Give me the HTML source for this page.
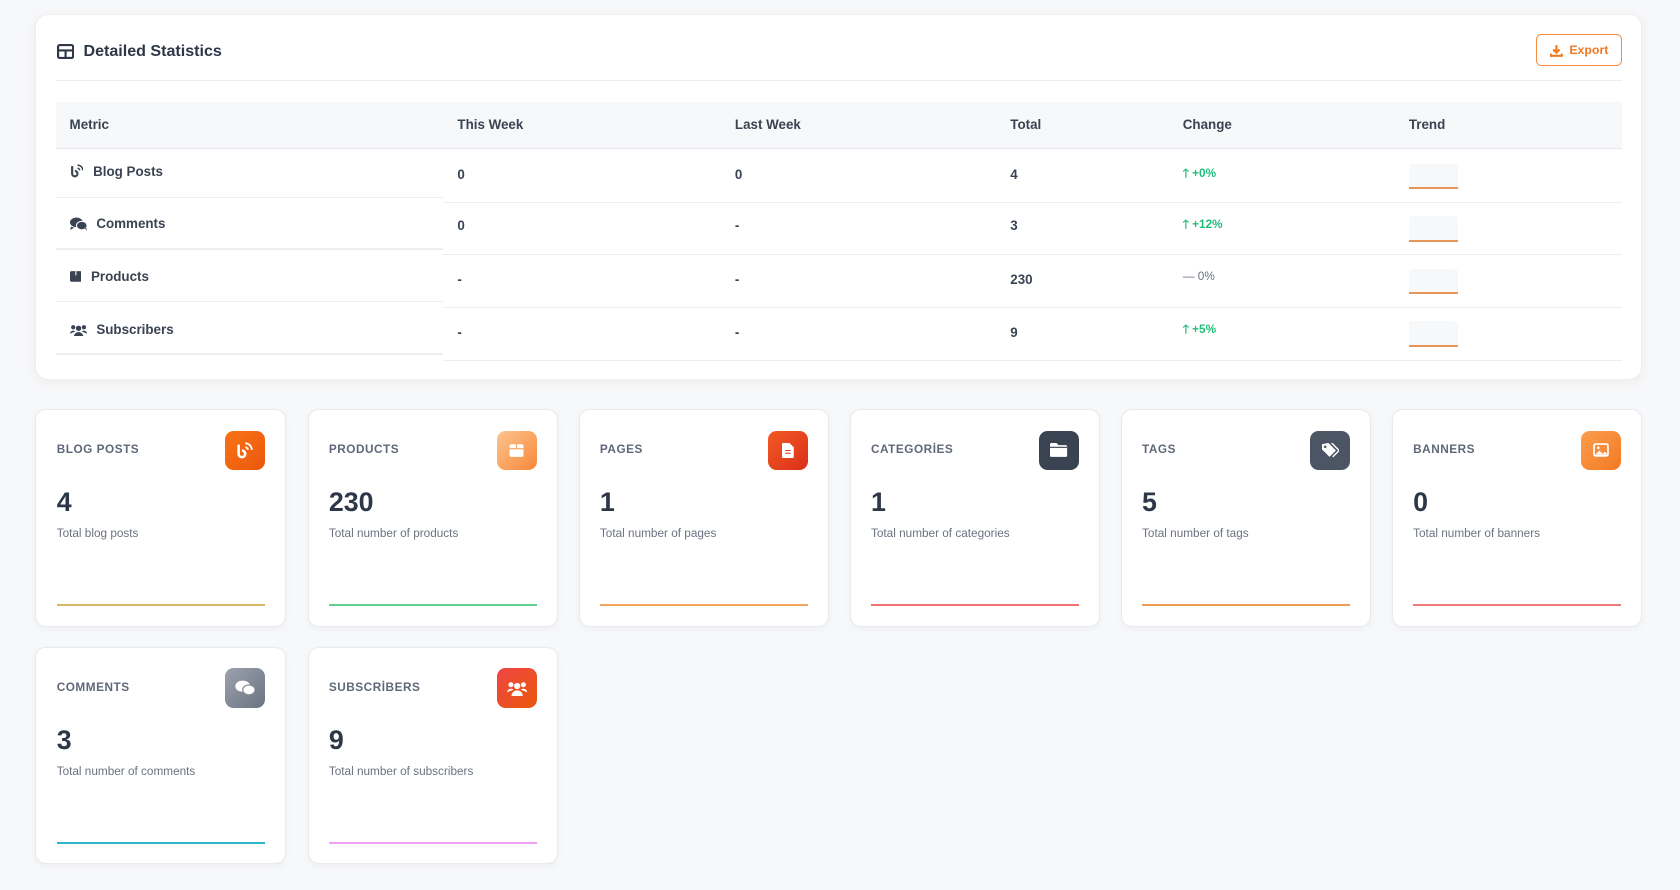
<!DOCTYPE html>
<html><head><meta charset="utf-8"><style>
html{zoom:1.07143}
body{margin:0;width:1568px;height:831px;background:#f7f8fa;font-family:"Liberation Sans",sans-serif;color:#2d3748;position:relative;overflow:hidden}
.panel{position:absolute;left:33px;top:13px;width:1498px;height:340px;background:#fff;border:1px solid #eceef1;border-radius:12px;box-shadow:0 2px 8px rgba(230,200,180,.25)}
.title{position:absolute;left:19px;top:25px;font-size:15px;font-weight:bold;display:flex;align-items:center;gap:9px;color:#2d3748}
.exp{position:absolute;right:18px;top:18px;width:80px;height:30px;border:1.5px solid #f58a3a;border-radius:5px;color:#f07a24;font-size:11.5px;font-weight:bold;display:flex;align-items:center;justify-content:center;gap:6px;box-sizing:border-box}
.hr{position:absolute;left:18px;right:18px;top:61px;height:1px;background:#eceef1}
.th{position:absolute;left:18px;right:18px;top:81px;height:43px;background:#f7f8fa;border-bottom:1px solid #e6e9ee}
.c{position:absolute;font-size:12.5px;font-weight:bold;color:#3a4352;display:flex;align-items:center;gap:9px}
.row{position:absolute;height:1px;background:#eceef1}
.card{position:absolute;width:232px;height:201px;background:#fff;border:1px solid #e8eaee;border-radius:10px;box-shadow:0 2px 6px rgba(0,0,0,.04)}
.card .l{position:absolute;left:19px;top:31px;font-size:11px;font-weight:bold;color:#5f6878;letter-spacing:.5px}
.card .ic{position:absolute;right:19px;top:19px;width:37px;height:37px;border-radius:8px;display:flex;align-items:center;justify-content:center}
.card .n{position:absolute;left:19px;top:72px;font-size:25px;font-weight:bold;color:#2d3748}
.card .d{position:absolute;left:19px;top:109px;font-size:11px;color:#6b7280}
.card .b{position:absolute;left:19px;right:19px;top:181px;height:2px}
.tr{position:absolute;width:46px;height:22px;background:#f7f8fa;border-bottom:2px solid #e8955a;border-radius:3px 3px 0 0}
.g{color:#1fbf7a;font-size:11px;gap:3px}
</style></head><body>
<div class="panel">
<div class="title"><svg width="16" height="14" viewBox="0 0 16 14"><rect x="1" y="1" width="14" height="12" rx="1.5" fill="none" stroke="#2d3748" stroke-width="2"/><path d="M1 6h14M8 6v7" stroke="#2d3748" stroke-width="2"/></svg>Detailed Statistics</div>
<div class="exp"><svg width="12" height="12" viewBox="0 0 12 12"><path d="M6 1v7M3 5l3 3 3-3M1 9v2h10V9" stroke="#f07a24" stroke-width="2" fill="none"/></svg>Export</div>
<div class="hr"></div>
<div class="th"></div>
<div class="c" style="left:31px;top:95px">Metric</div>
<div class="c" style="left:393px;top:95px">This Week</div>
<div class="c" style="left:652px;top:95px">Last Week</div>
<div class="c" style="left:909px;top:95px">Total</div>
<div class="c" style="left:1070px;top:95px">Change</div>
<div class="c" style="left:1281px;top:95px">Trend</div>

<div class="c" style="left:31px;top:139px"><svg width="13" height="13" viewBox="0 0 13 13"><path d="M2 2v7a2.5 2.5 0 1 0 2.5-2.5" stroke="#3a4352" stroke-width="2" fill="none"/><path d="M7 1a5 5 0 0 1 5 5M7 4a2 2 0 0 1 2 2" stroke="#3a4352" stroke-width="1.4" fill="none"/></svg>Blog Posts</div>
<div class="c" style="left:31px;top:188px"><svg width="16" height="13" viewBox="0 0 16 13"><ellipse cx="6" cy="5" rx="6" ry="4.5" fill="#3a4352"/><ellipse cx="11" cy="8" rx="5" ry="4" fill="#3a4352" stroke="#fff" stroke-width="1"/><path d="M1 9l-1 3 4-2z M14 11l2 2-1-3z" fill="#3a4352"/></svg>Comments</div>
<div class="c" style="left:31px;top:237px"><svg width="11" height="11" viewBox="0 0 11 11"><rect x="0" y="1" width="11" height="10" rx="1.5" fill="#3a4352"/><path d="M5.5 1v4" stroke="#fff" stroke-width="1"/></svg>Products</div>
<div class="c" style="left:31px;top:287px"><svg width="16" height="12" viewBox="0 0 16 12"><circle cx="8" cy="4" r="2.5" fill="#3a4352"/><circle cx="3" cy="3" r="2" fill="#3a4352"/><circle cx="13" cy="3" r="2" fill="#3a4352"/><path d="M3.5 12a4.5 4.5 0 0 1 9 0zM0 9a3 3 0 0 1 5-2zM16 9a3 3 0 0 0-5-2z" fill="#3a4352"/></svg>Subscribers</div>

<div class="c" style="left:393px;top:142px">0</div><div class="c" style="left:652px;top:142px">0</div><div class="c" style="left:909px;top:142px">4</div><div class="c g" style="left:1070px;top:140px">🡑 +0%</div>
<div class="c" style="left:393px;top:190px">0</div><div class="c" style="left:652px;top:190px">-</div><div class="c" style="left:909px;top:190px">3</div><div class="c g" style="left:1070px;top:188px">🡑 +12%</div>
<div class="c" style="left:393px;top:240px">-</div><div class="c" style="left:652px;top:240px">-</div><div class="c" style="left:909px;top:240px">230</div><div class="c" style="left:1070px;top:238px;color:#6b7280;font-size:11px;font-weight:normal">— 0%</div>
<div class="c" style="left:393px;top:289px">-</div><div class="c" style="left:652px;top:289px">-</div><div class="c" style="left:909px;top:289px">9</div><div class="c g" style="left:1070px;top:286px">🡑 +5%</div>

<div class="tr" style="left:1281px;top:139px"></div><div class="tr" style="left:1281px;top:188px"></div><div class="tr" style="left:1281px;top:237px"></div><div class="tr" style="left:1281px;top:286px"></div>

<div class="row" style="left:18px;width:362px;top:170px"></div><div class="row" style="left:380px;right:18px;top:175px"></div>
<div class="row" style="left:18px;width:362px;top:218px"></div><div class="row" style="left:380px;right:18px;top:223px"></div>
<div class="row" style="left:18px;width:362px;top:267px"></div><div class="row" style="left:380px;right:18px;top:273px"></div>
<div class="row" style="left:18px;width:362px;top:316px"></div><div class="row" style="left:380px;right:18px;top:322px"></div>
</div>

<div class="card" style="left:33px;top:382px"><div class="l">BLOG POSTS</div><div class="ic" style="background:linear-gradient(135deg,#f97316,#ea580c)"><svg width="16" height="16" viewBox="0 0 13 13"><path d="M2 2v7a2.5 2.5 0 1 0 2.5-2.5" stroke="#fff" stroke-width="2" fill="none"/><path d="M7 1a5 5 0 0 1 5 5M7 4a2 2 0 0 1 2 2" stroke="#fff" stroke-width="1.4" fill="none"/></svg></div><div class="n">4</div><div class="d">Total blog posts</div><div class="b" style="background:#d9b56a"></div></div>
<div class="card" style="left:287px;top:382px"><div class="l">PRODUCTS</div><div class="ic" style="background:linear-gradient(135deg,#fdc48f,#f7883a)"><svg width="14" height="13" viewBox="0 0 11 11"><rect x="0" y="1" width="11" height="10" rx="1.5" fill="#fff"/><path d="M5.5 1v4M0 4.5h11" stroke="#f9a866" stroke-width="1"/></svg></div><div class="n">230</div><div class="d">Total number of products</div><div class="b" style="background:#5fd08f"></div></div>
<div class="card" style="left:540px;top:382px"><div class="l">PAGES</div><div class="ic" style="background:linear-gradient(135deg,#f15a24,#dc2f1a)"><svg width="11" height="14" viewBox="0 0 11 14"><path d="M0 1a1 1 0 0 1 1-1h6l4 4v9a1 1 0 0 1-1 1H1a1 1 0 0 1-1-1z" fill="#fff"/><path d="M3 7h5M3 9.5h5" stroke="#e34020" stroke-width="1"/></svg></div><div class="n">1</div><div class="d">Total number of pages</div><div class="b" style="background:#f5a55e"></div></div>
<div class="card" style="left:793px;top:382px"><div class="l">CATEGORİES</div><div class="ic" style="background:#3a4352"><svg width="16" height="13" viewBox="0 0 16 13"><path d="M0 1.5A1.5 1.5 0 0 1 1.5 0H6l2 2h6.5A1.5 1.5 0 0 1 16 3.5v8a1.5 1.5 0 0 1-1.5 1.5h-13A1.5 1.5 0 0 1 0 11.5z" fill="#fff"/><path d="M0 4h16" stroke="#3a4352"/></svg></div><div class="n">1</div><div class="d">Total number of categories</div><div class="b" style="background:#ef7373"></div></div>
<div class="card" style="left:1046px;top:382px"><div class="l">TAGS</div><div class="ic" style="background:#4b5563"><svg width="16" height="14" viewBox="0 0 16 14"><path d="M0 1v5l7 7 6-6-7-7z" fill="#fff"/><circle cx="3" cy="3.5" r="1.2" fill="#4b5563"/><path d="M9 0l7 7-6 6" stroke="#fff" stroke-width="1.3" fill="none"/></svg></div><div class="n">5</div><div class="d">Total number of tags</div><div class="b" style="background:#eaa050"></div></div>
<div class="card" style="left:1299px;top:382px"><div class="l">BANNERS</div><div class="ic" style="background:linear-gradient(135deg,#fb9d4f,#f37a22)"><svg width="15" height="13" viewBox="0 0 15 13"><rect x="1" y="1" width="13" height="11" rx="1.5" fill="none" stroke="#fff" stroke-width="1.6"/><path d="M2 11l4-4 3 3 2-2 3 3z" fill="#fff"/><circle cx="5" cy="4.5" r="1.2" fill="#fff"/></svg></div><div class="n">0</div><div class="d">Total number of banners</div><div class="b" style="background:#f07b7b"></div></div>
<div class="card" style="left:33px;top:604px"><div class="l">COMMENTS</div><div class="ic" style="background:linear-gradient(135deg,#9ca3af,#6b7280)"><svg width="19" height="15" viewBox="0 0 16 13"><ellipse cx="6" cy="5" rx="6" ry="4.5" fill="#fff"/><ellipse cx="11" cy="8" rx="5" ry="4" fill="#fff" stroke="#878d98" stroke-width="1"/></svg></div><div class="n">3</div><div class="d">Total number of comments</div><div class="b" style="background:#2bb6c9"></div></div>
<div class="card" style="left:287px;top:604px"><div class="l">SUBSCRİBERS</div><div class="ic" style="background:linear-gradient(135deg,#ef4444,#ea580c)"><svg width="19" height="14" viewBox="0 0 16 12"><circle cx="8" cy="4" r="2.5" fill="#fff"/><circle cx="3" cy="3" r="2" fill="#fff"/><circle cx="13" cy="3" r="2" fill="#fff"/><path d="M3.5 12a4.5 4.5 0 0 1 9 0zM0 9a3 3 0 0 1 5-2zM16 9a3 3 0 0 0-5-2z" fill="#fff"/></svg></div><div class="n">9</div><div class="d">Total number of subscribers</div><div class="b" style="background:#f0a0f0"></div></div>
</body></html>
